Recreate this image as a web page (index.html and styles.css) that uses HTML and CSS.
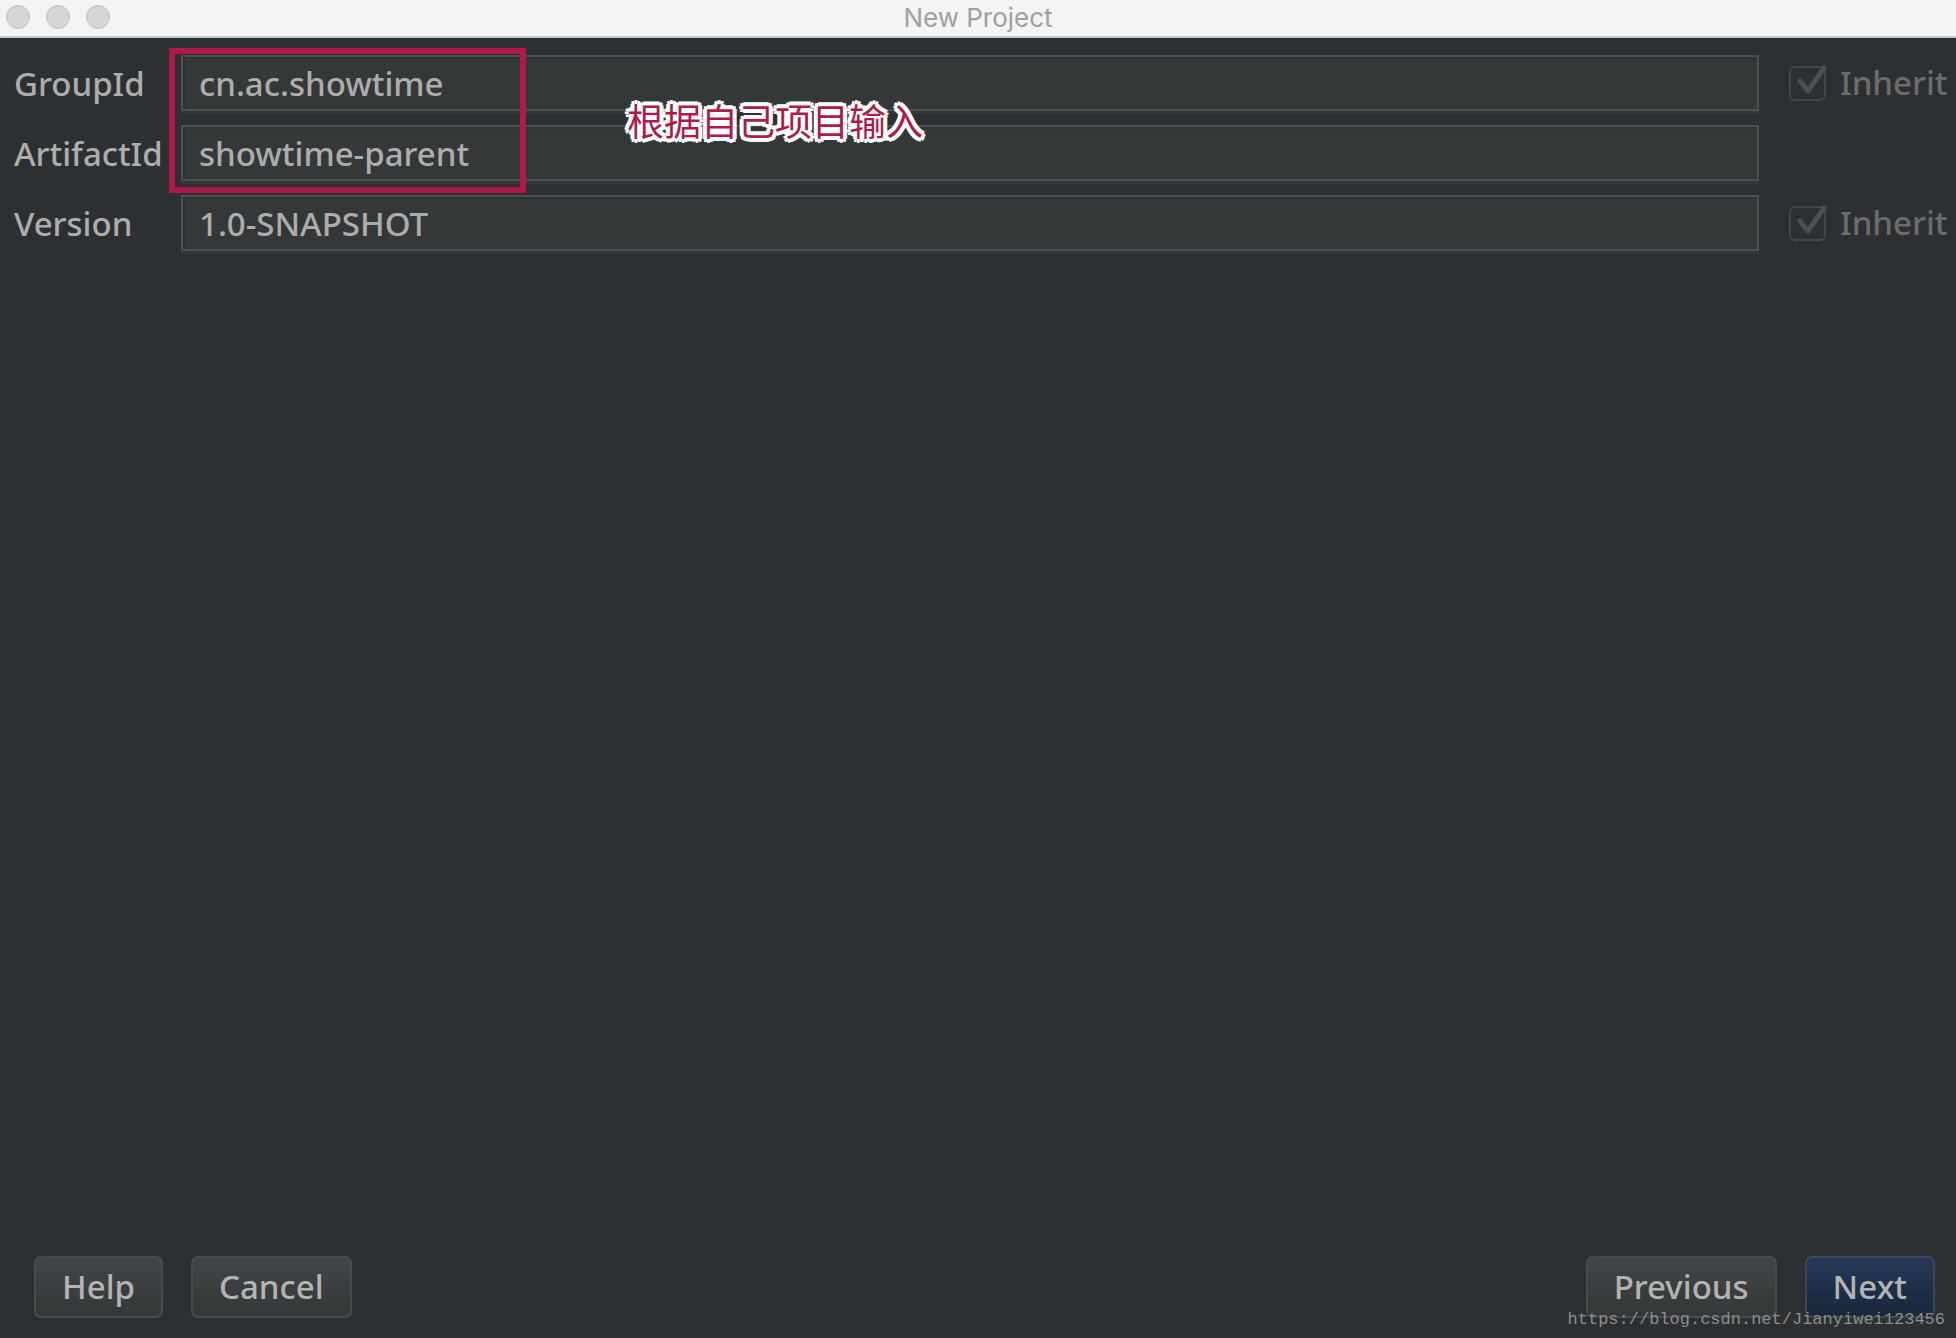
FILE: index.html
```html
<!DOCTYPE html>
<html lang="en">

<head>
    <meta charset="UTF-8">
    <meta name="viewport" content="width=device-width, initial-scale=1.0">
    <title>New Project</title>
    <link rel="stylesheet" href="styles.css">
</head>

<body>
    <header class="title-bar">
        <div class="window-dots">
            <span class="dot"></span>
            <span class="dot"></span>
            <span class="dot"></span>
        </div>
        <h1 class="title">New Project</h1>
    </header>

    <form class="dialog">
        <div class="fields">
            <label for="groupId" class="name">GroupId</label>
            <input type="text" id="groupId" class="field" value="cn.ac.showtime">
            <label class="inherit">
                <input type="checkbox" class="check" checked disabled>
                <svg class="tick" viewBox="0 0 38 36"><path d="M11 16 L19 26 L35 3"/></svg>
                Inherit
            </label>

            <label for="artifactId" class="name">ArtifactId</label>
            <input type="text" id="artifactId" class="field" value="showtime-parent">

            <label for="version" class="name">Version</label>
            <input type="text" id="version" class="field" value="1.0-SNAPSHOT">
            <label class="inherit">
                <input type="checkbox" class="check" checked disabled>
                <svg class="tick" viewBox="0 0 38 36"><path d="M11 16 L19 26 L35 3"/></svg>
                Inherit
            </label>

            <!-- Annotation over the first two fields -->
            <div class="highlight"></div>
            <p class="note" lang="zh-CN">根据自己项目输入</p>
        </div>

        <div class="actions">
            <button type="button" class="btn">Help</button>
            <button type="button" class="btn">Cancel</button>
            <button type="button" class="btn previous">Previous</button>
            <button type="submit" class="btn next">Next</button>
        </div>
    </form>

    <div class="watermark">https://blog.csdn.net/Jianyiwei123456</div>
</body>

</html>
```

FILE: styles.css
```css
/* General styles */
* {
    box-sizing: border-box;
}

body {
    position: relative;
    display: flex;
    flex-direction: column;
    min-height: 100vh;
    margin: 0;
    background-color: #2d3032;
    color: #adadad;
    font-family: "Noto Sans", sans-serif;
    font-size: 33px;
    font-weight: 500;
    line-height: 48px;
}

/* Title bar */
.title-bar {
    display: grid;
    grid-template-columns: 1fr auto 1fr;
    align-items: center;
    height: 38px;
    padding: 0 6px 4px;
    background: #f4f4f4;
    border-bottom: 2px solid #c4c6c6;
}

.window-dots {
    display: flex;
    gap: 16px;
}

.dot {
    width: 24px;
    height: 24px;
    border: 1px solid #bfbfbf;
    border-radius: 50%;
    background: #d5d5d5;
}

.title {
    margin: 0;
    padding-top: 2px;
    color: #a0a0a0;
    font-family: Inter, sans-serif;
    font-size: 26px;
    font-weight: 400;
    line-height: 32px;
}

/* Form */
.dialog {
    display: flex;
    flex: 1;
    flex-direction: column;
    justify-content: space-between;
}

.fields {
    position: relative;
    display: grid;
    grid-template-columns: 167px 1fr 197px;
    row-gap: 14px;
    align-items: center;
    padding: 17px 0 0 14px;
}

.name {
    grid-column: 1;
    padding-top: 2px;
}

.field {
    width: 100%;
    height: 56px;
    padding: 0 16px;
    border: 2px solid #4d4f50;
    border-radius: 0;
    background: #353839;
    box-shadow: inset 3px 2px 0 #2f3234, 0 3px 0 #35383a;
    color: #adadad;
    font: inherit;
    outline: none;
}

.inherit {
    position: relative;
    display: flex;
    align-items: center;
    gap: 14px;
    padding-left: 30px;
    color: #6c6c6c;
}

.check {
    appearance: none;
    width: 37px;
    height: 35px;
    margin: 0;
    border: 2px solid #434546;
    border-radius: 6px;
}

/* The tick is drawn over its box */
.tick {
    position: absolute;
    left: 30px;
    width: 38px;
    height: 36px;
    fill: none;
    stroke: #4d4e4f;
    stroke-width: 5;
    stroke-linecap: round;
    stroke-linejoin: round;
}

/* Annotation */
.highlight {
    position: absolute;
    top: 10px;
    left: 169px;
    width: 357px;
    height: 145px;
    border: 6px solid #ad1a4b;
}

.note {
    position: absolute;
    top: 58px;
    left: 627px;
    margin: 0;
    color: #ad1a4b;
    font-family: "Noto Sans CJK SC", sans-serif;
    font-size: 37px;
    font-weight: 400;
    line-height: 48px;
    text-shadow:
        4px 0 #fff, -4px 0 #fff, 0 4px #fff, 0 -4px #fff,
        3px 3px #fff, -3px 3px #fff, 3px -3px #fff, -3px -3px #fff,
        2px 0 #fff, -2px 0 #fff, 0 2px #fff, 0 -2px #fff;
}

/* Buttons */
.actions {
    display: flex;
    gap: 28px;
    padding: 0 21px 20px 34px;
}

.btn {
    height: 62px;
    padding: 0 26px;
    border: 2px solid #484a4c;
    border-radius: 7px;
    background: linear-gradient(#414547, #343839);
    color: #b3b3b3;
    font: inherit;
    cursor: pointer;
}

.previous {
    margin-left: auto;
}

.next {
    border-color: #3c4757;
    background: linear-gradient(#253957, #1a263b);
}

.watermark {
    position: absolute;
    right: 11px;
    bottom: 6px;
    color: #8b8d8e;
    font-family: "Liberation Mono", monospace;
    font-size: 17px;
    font-weight: 400;
    line-height: 24px;
}
```
